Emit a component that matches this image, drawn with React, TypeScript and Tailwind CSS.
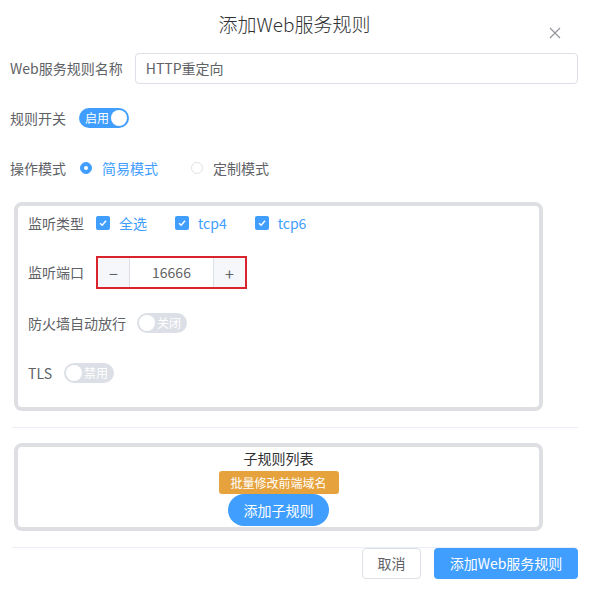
import React from "react";

const font = { fontFamily: '"Noto Sans CJK SC", "Noto Sans", sans-serif' };

function Switch({ on, text }: { on: boolean; text: string }) {
  return (
    <span
      className={`relative inline-flex h-[20px] w-[50px] items-center rounded-full ${
        on ? "bg-[#409eff]" : "bg-[#dcdfe6]"
      }`}
    >
      <span
        className={`absolute top-[2px] h-[16px] w-[16px] rounded-full bg-white ${
          on ? "right-[2px]" : "left-[2px]"
        }`}
      />
      <span
        className={`absolute text-[12px] leading-none text-white ${
          on ? "left-[6px]" : "right-[6px]"
        }`}
      >
        {text}
      </span>
    </span>
  );
}

function Check({ label }: { label: string }) {
  return (
    <span className="mr-[28px] inline-flex items-center">
      <span className="flex h-[14px] w-[14px] items-center justify-center rounded-[2px] bg-[#409eff]">
        <svg width="10" height="10" viewBox="0 0 10 10">
          <path d="M2 5.2 L4.2 7.3 L8 2.8" fill="none" stroke="white" strokeWidth="1.4" />
        </svg>
      </span>
      <span className="ml-[9px] text-[14px] text-[#409eff]">{label}</span>
    </span>
  );
}

function Radio({ on, label }: { on: boolean; label: string }) {
  return (
    <span className="mr-[33px] inline-flex items-center">
      <span
        className={`flex h-[12px] w-[12px] items-center justify-center rounded-full border ${
          on ? "border-[#409eff] bg-[#409eff]" : "border-[#e0e2e6] bg-white"
        }`}
      >
        {on && <span className="h-[4px] w-[4px] rounded-full bg-white" />}
      </span>
      <span className={`ml-[10px] text-[14px] ${on ? "text-[#409eff]" : "text-[#606266]"}`}>
        {label}
      </span>
    </span>
  );
}

export default function App() {
  return (
    <div className="h-[591px] w-[589px] bg-white text-[14px] text-[#606266]" style={font}>
      {/* header */}
      <div className="relative flex h-[48px] items-center justify-center pt-[1px]">
        <span className="text-[19px] font-light text-[#303133]">添加Web服务规则</span>
        <svg
          className="absolute left-[549px] top-[27px]"
          width="12"
          height="12"
          viewBox="0 0 12 12"
        >
          <path d="M1 1 L11 11 M11 1 L1 11" stroke="#909399" strokeWidth="1.1" />
        </svg>
      </div>

      <div className="pl-[10px] pr-[11px]">
        <div className="mt-[5px] flex h-[31px] items-center gap-[12px]">
          <span>Web服务规则名称</span>
          <div className="flex h-[31px] flex-1 items-center rounded-[4px] border border-[#dcdfe6] px-[10px] text-[#606266]">
            HTTP重定向
          </div>
        </div>

        <div className="mt-[24px] flex h-[20px] items-center gap-[13px]">
          <span>规则开关</span>
          <Switch on text="启用" />
        </div>

        <div className="mt-[30px] flex h-[20px] items-center">
          <span className="mr-[14px]">操作模式</span>
          <Radio on label="简易模式" />
          <Radio on={false} label="定制模式" />
        </div>

        {/* listen box */}
        <div className="ml-[4px] mt-[24px] w-[529px] rounded-[8px] border-[4px] border-[#dddfe2] px-[10px] pb-[24px] pt-[7px]">
          <div className="flex h-[20px] items-center">
            <span className="mr-[12px]">监听类型</span>
            <Check label="全选" />
            <Check label="tcp4" />
            <Check label="tcp6" />
          </div>

          <div className="mt-[23px] flex h-[33px] items-center">
            <span className="mr-[12px]">监听端口</span>
            <div className="flex h-[33px] w-[151px] items-stretch border-2 border-[#d9232d] bg-white">
              <span className="flex w-[32px] items-center justify-center border-r border-[#dcdfe6] bg-[#f5f7fa] text-[16px] text-[#606266]">
                −
              </span>
              <span className="flex flex-1 items-center justify-center text-[14px] text-[#606266]">
                16666
              </span>
              <span className="flex w-[32px] items-center justify-center border-l border-[#dcdfe6] bg-[#f5f7fa] text-[16px] text-[#606266]">
                +
              </span>
            </div>
          </div>

          <div className="mt-[24px] flex h-[20px] items-center gap-[11px]">
            <span>防火墙自动放行</span>
            <Switch on={false} text="关闭" />
          </div>

          <div className="mt-[30px] flex h-[20px] items-center gap-[12px]">
            <span>TLS</span>
            <Switch on={false} text="禁用" />
          </div>
        </div>

        <div className="ml-[2px] mt-[16px] h-px bg-[#ebeef5]" />

        {/* sub rules */}
        <div className="ml-[4px] mt-[15px] flex h-[88px] w-[529px] flex-col items-center rounded-[8px] border-[4px] border-[#dddfe2] pt-[1px]">
          <span className="h-[20px] leading-[20px] text-[#303133]">子规则列表</span>
          <span className="mt-[3px] flex h-[23px] w-[120px] items-center justify-center rounded-[3px] bg-[#e6a23c] text-[12px] text-white">
            批量修改前端域名
          </span>
          <span className="flex h-[32px] w-[101px] items-center justify-center rounded-full bg-[#409eff] text-[14px] text-white">
            添加子规则
          </span>
        </div>

        <div className="ml-[2px] mt-[16px] h-px bg-[#ebeef5]" />

        <div className="flex justify-end gap-[13px]">
          <span className="flex h-[31px] w-[59px] items-center justify-center rounded-[4px] border border-[#dcdfe6] text-[#606266]">
            取消
          </span>
          <span className="flex h-[31px] w-[144px] items-center justify-center rounded-[4px] bg-[#409eff] text-white">
            添加Web服务规则
          </span>
        </div>
      </div>
    </div>
  );
}
